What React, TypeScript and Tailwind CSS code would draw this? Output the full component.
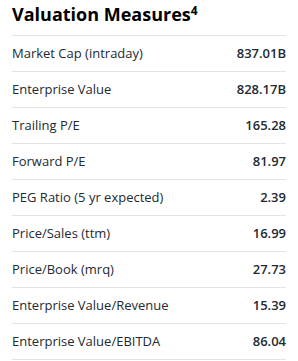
import React from "react";

const rows: [string, string][] = [
  ["Market Cap (intraday)", "837.01B"],
  ["Enterprise Value", "828.17B"],
  ["Trailing P/E", "165.28"],
  ["Forward P/E", "81.97"],
  ["PEG Ratio (5 yr expected)", "2.39"],
  ["Price/Sales (ttm)", "16.99"],
  ["Price/Book (mrq)", "27.73"],
  ["Enterprise Value/Revenue", "15.39"],
  ["Enterprise Value/EBITDA", "86.04"],
];

export default function App() {
  return (
    <div
      className="w-[298px] h-[361px] bg-white px-3 text-[#232a31]"
      style={{ fontFamily: '"Open Sans", sans-serif' }}
    >
      <div className="h-[35px] pt-[2px]">
        <h3 className="text-[18px] leading-[24px] font-bold text-black">
          Valuation Measures
          <sup className="text-[12px] font-bold">4</sup>
        </h3>
      </div>
      {rows.map(([label, value]) => (
        <div
          key={label}
          className="flex h-[36px] items-center justify-between border-t border-[#e0e4e9] text-[13px]"
        >
          <span>{label}</span>
          <span className="font-semibold">{value}</span>
        </div>
      ))}
      <div className="border-t border-[#e0e4e9]" />
    </div>
  );
}
